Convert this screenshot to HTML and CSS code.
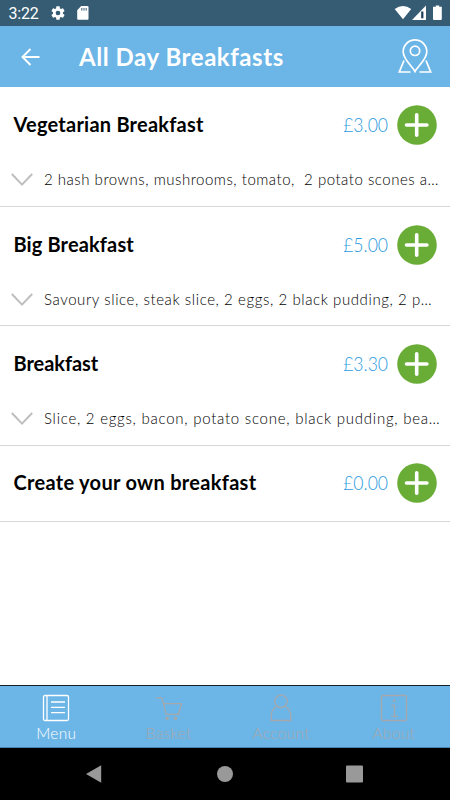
FILE: index.html
```
<!DOCTYPE html>
<html lang="en">
<head>
<meta charset="utf-8">
<title>All Day Breakfasts</title>
<link rel="stylesheet" href="styles.css">
</head>
<body>
<svg class="defs" aria-hidden="true">
  <symbol id="plus" viewBox="0 0 40 40"><circle cx="20" cy="20" r="19.8" fill="#69ad37"/><path d="M20 9.800v20.400M9.800 20h20.400" transform="translate(-.3 0)" stroke="#fff" stroke-width="3.600" stroke-linecap="round"/></symbol>
  <symbol id="chevron" viewBox="0 0 22 14"><path d="M.8 1l10.200 10.600L21.200 1" fill="none" stroke="#bebebe" stroke-width="2"/></symbol>
</svg>
<div class="screen">
  <div class="status">
    <span class="time">3:22</span>
    <svg class="gear" viewBox="0 0 24 24"><path fill="#fff" d="M19.43 12.98c.04-.32.07-.64.07-.98s-.03-.66-.07-.98l2.11-1.65c.19-.15.24-.42.12-.64l-2-3.46c-.12-.22-.39-.3-.61-.22l-2.49 1c-.52-.4-1.08-.73-1.69-.98l-.38-2.65A.488.488 0 0 0 14 2h-4c-.25 0-.46.18-.49.42l-.38 2.65c-.61.25-1.17.59-1.69.98l-2.49-1c-.23-.09-.49 0-.61.22l-2 3.46c-.13.22-.07.49.12.64l2.11 1.65c-.04.32-.07.65-.07.98s.03.66.07.98l-2.11 1.65c-.19.15-.24.42-.12.64l2 3.46c.12.22.39.3.61.22l2.49-1c.52.4 1.08.73 1.69.98l.38 2.65c.03.24.24.42.49.42h4c.25 0 .46-.18.49-.42l.38-2.65c.61-.25 1.17-.59 1.69-.98l2.49 1c.23.09.49 0 .61-.22l2-3.46c.12-.22.07-.49-.12-.64zM12 15.5A3.5 3.5 0 1 1 12 8.500a3.500 3.500 0 0 1 0 7z"/></svg>
    <svg class="card" viewBox="0 0 12 14"><path fill="#fff" d="M4.200 0H10.500Q11.500 0 11.500 1V12.800Q11.500 13.800 10.500 13.800H1.200Q.2 13.800 .2 12.800V4.300z"/><path d="M4.800 2v2.600M7 2v2.600M9.200 2v2.600" stroke="#365c73" stroke-width="1"/></svg>
    <svg class="signals" viewBox="0 0 50 16">
      <path fill="#fff" d="M.7 4.100Q9 -2 17.200 4.100L9 14.200z"/>
      <path fill="#fff" d="M32 .5V15H18z"/><path fill="#163c59" d="M27.200 6.500h2.200v6.800h-2.200z"/>
      <path fill="#fff" d="M41.800 .5h3.400v1.300h2.600V14a1 1 0 0 1-1 1h-6.800a1 1 0 0 1-1-1V1.800h2.800z"/>
    </svg>
  </div>
  <header class="bar">
    <svg class="back" viewBox="0 0 20 18"><path d="M9.500 1L1.500 9l8 8M1.500 9h17" fill="none" stroke="#fff" stroke-width="1.900"/></svg>
    <h1>All Day Breakfasts</h1>
    <svg class="map" viewBox="0 0 34 34" fill="none" stroke="#fff" stroke-width="1.700"><path d="M17 32.500C14.500 27.500 5.200 20.500 5.200 12.700a11.800 11.800 0 0 1 23.600 0C28.800 20.500 19.500 27.500 17 32.500z"/><circle cx="17" cy="11.800" r="4.700"/><path d="M6 21.500L1.300 33H12.500M28 21.500L32.700 33H21.500"/></svg>
  </header>
  <main class="list">
    <section class="item">
      <div class="head"><h2 class="n1">Vegetarian Breakfast</h2><span class="price">£3.00</span><svg class="add"><use href="#plus"/></svg></div>
      <div class="detail"><svg class="chev"><use href="#chevron"/></svg><p class="d1">2 hash browns, mushrooms, tomato,&nbsp; 2 potato scones a…</p></div>
    </section>
    <section class="item">
      <div class="head"><h2 class="n2">Big Breakfast</h2><span class="price">£5.00</span><svg class="add"><use href="#plus"/></svg></div>
      <div class="detail"><svg class="chev"><use href="#chevron"/></svg><p class="d2">Savoury slice, steak slice, 2 eggs, 2 black pudding, 2 p…</p></div>
    </section>
    <section class="item">
      <div class="head"><h2 class="n3">Breakfast</h2><span class="price">£3.30</span><svg class="add"><use href="#plus"/></svg></div>
      <div class="detail"><svg class="chev"><use href="#chevron"/></svg><p class="d3">Slice, 2 eggs, bacon, potato scone, black pudding, bea…</p></div>
    </section>
    <section class="item">
      <div class="head"><h2 class="n4">Create your own breakfast</h2><span class="price">£0.00</span><svg class="add"><use href="#plus"/></svg></div>
    </section>
  </main>
  <nav class="tabs">
    <div class="tab active"><svg viewBox="0 0 28 28"><rect x="1.500" y="1.500" width="25" height="25" rx="1.500"/><path d="M5 1.500v25M9 8h14M9 13.300h14M9 18.600h14"/></svg><span>Menu</span></div>
    <div class="tab"><svg viewBox="0 0 28 28"><path d="M.8 3.800h6l4.500 16.500h12L26.700 9.700H8.600"/><circle class="dot" cx="12.200" cy="24.300" r="1.800"/><circle class="dot" cx="20.500" cy="24.300" r="1.800"/></svg><span>Basket</span></div>
    <div class="tab"><svg viewBox="0 0 28 28"><circle cx="14" cy="7.300" r="6.200"/><path d="M9.800 12.500C6 14.500 4.200 18.300 4.200 22v4.500h19.600V22c0-3.700-1.800-7.500-5.600-9.500"/></svg><span>Account</span></div>
    <div class="tab"><svg viewBox="0 0 28 28"><rect x="1.500" y="1.500" width="25" height="25" rx="1.500"/><path d="M11.500 11.500h3v10.800M11 22.300h7"/><circle class="dot" cx="14.200" cy="6.800" r="1.300"/></svg><span>About</span></div>
  </nav>
  <div class="system">
    <svg viewBox="0 0 18 18"><path d="M0 9L15.200 .2v17.600z"/></svg>
    <svg viewBox="0 0 18 18"><circle cx="9" cy="9" r="8"/></svg>
    <svg viewBox="0 0 18 18"><rect x="0" y=".5" width="17" height="17" rx="1"/></svg>
  </div>
</div>
</body>
</html>
```
FILE: styles.css
```
* { box-sizing: border-box; }
body { margin: 0; background: #fff; font-family: Lato, sans-serif; color: #000; }
h1, h2, p { margin: 0; white-space: nowrap; }
svg { display: block; flex: none; }
.defs { position: absolute; width: 0; height: 0; }
.screen { width: 450px; height: 800px; display: flex; flex-direction: column; overflow: hidden; }

.status { height: 26px; background: #365c73; display: flex; align-items: center; padding: 0 8px 0 8.5px; color: #fff; }
.time { font: 400 16px/26px Roboto, sans-serif; width: 41.5px; letter-spacing: -.2px; padding-top: 2px; }
.gear { width: 16px; height: 16px; }
.card { width: 12px; height: 14px; margin-left: 10.5px; }
.signals { width: 50px; height: 16px; margin-left: auto; margin-right: -1.5px; }

.bar { height: 61px; background: #6cb5e7; display: flex; align-items: center; padding: 0 18px 0 21px; color: #fff; }
.back { width: 20px; height: 18px; }
.bar h1 { margin-left: 38px; font-size: 24px; line-height: 30px; font-weight: 700; letter-spacing: .55px; }
.map { width: 34px; height: 34px; margin-left: auto; margin-top: -1px; }

.list { flex: 1; }
.item { border-bottom: 1px solid #d8d8d8; }
.head { height: 76px; display: flex; align-items: center; padding: 0 13px 0 13.5px; }
.item:last-child .head { height: 75px; }
.head h2 { font-size: 20px; font-weight: 700; line-height: 26px; padding-bottom: 2px; }
.n1 { letter-spacing: .23px; }
.n2 { letter-spacing: .13px; }
.n3 { letter-spacing: -.05px; }
.n4 { letter-spacing: .3px; }
.price { margin-left: auto; margin-right: 9px; padding-bottom: 2px; font-size: 20px; font-weight: 300; color: #2f9bdd; transform: scaleX(.88); transform-origin: right; }
.add { width: 40px; height: 40px; }
.detail { height: 42.5px; display: flex; align-items: flex-start; padding: 5px 0 0 11px; }
.chev { width: 22px; height: 14px; margin-top: 5px; }
.detail p { margin-left: 11px; font-size: 15px; line-height: 22px; font-weight: 300; }
.d1 { letter-spacing: .52px; }
.d2 { letter-spacing: .59px; }
.d3 { letter-spacing: .75px; }

.tabs { height: 63px; background: #6cb5e7; border-top: 1px solid #14202a; border-bottom: 1px solid #4784b0; display: flex; }
.tab { flex: 1; display: flex; flex-direction: column; align-items: center; padding-top: 8px; color: #a6a8ac; }
.tab svg { width: 28px; height: 28px; fill: none; stroke: currentColor; stroke-width: 1.3; }
.tab .dot { fill: currentColor; stroke: none; }
.tab span { font-size: 15.5px; font-weight: 300; line-height: 22px; letter-spacing: .3px; }
.active { color: #fff; }

.system { height: 52px; background: #000; display: flex; justify-content: center; align-items: center; gap: 112px; }
.system svg { width: 18px; height: 18px; fill: #999; }
```
